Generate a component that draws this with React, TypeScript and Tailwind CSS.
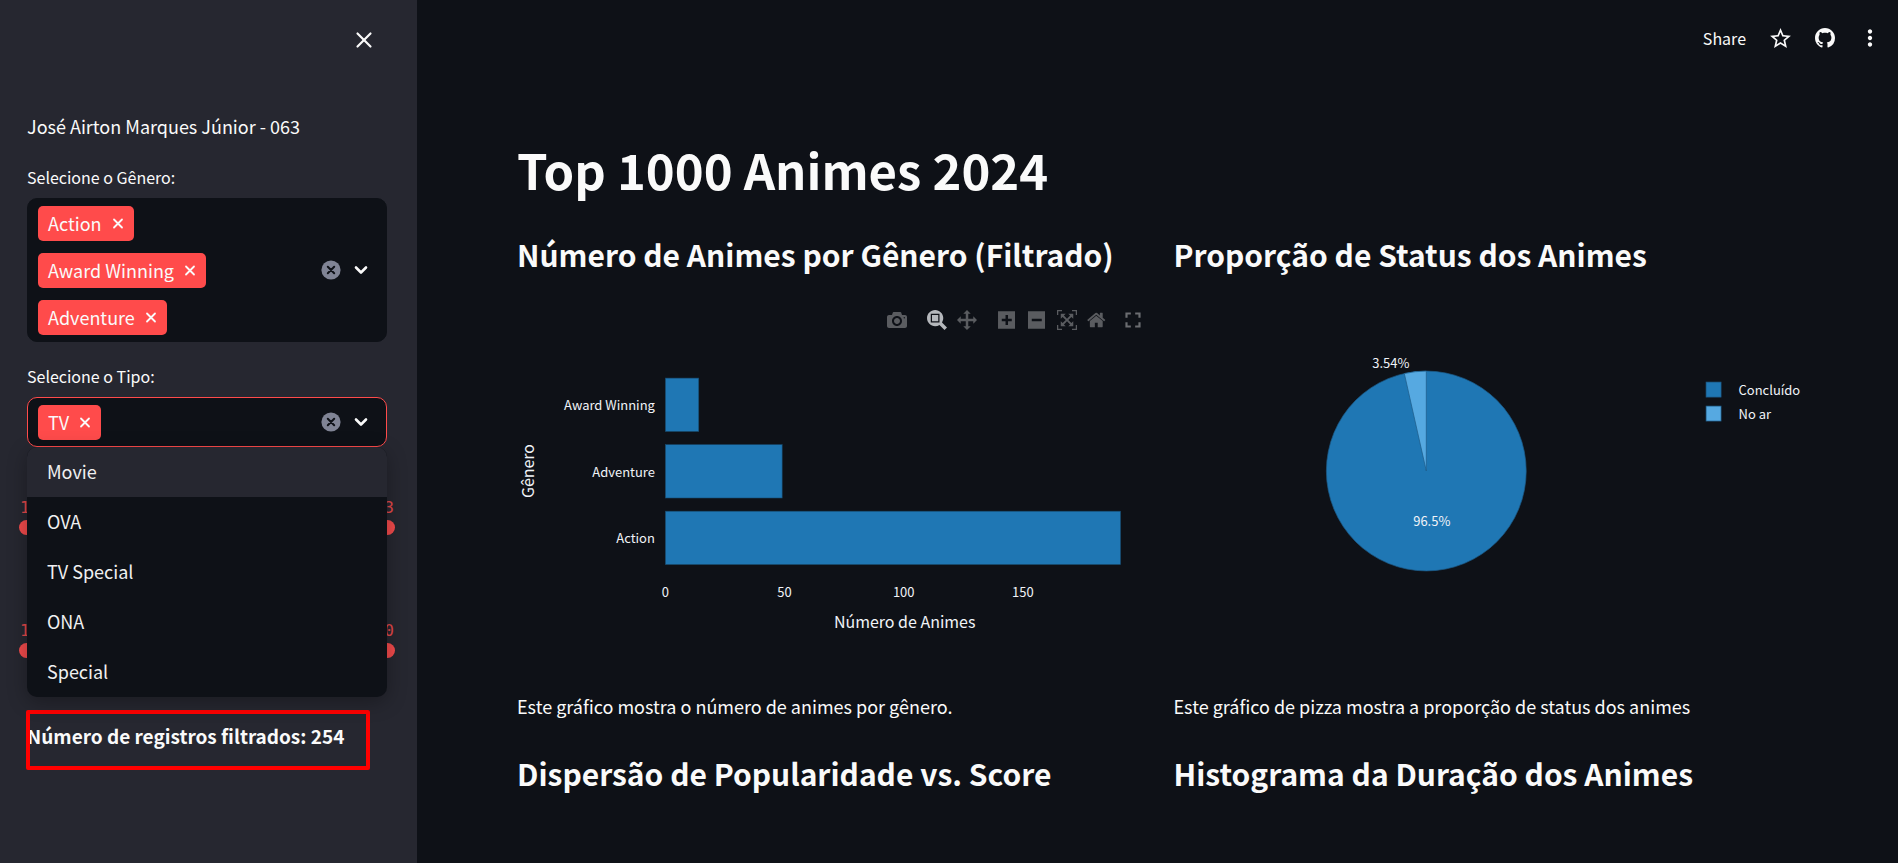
import { useState, type ReactNode } from "react";
import { X } from "lucide-react";
import { MdFullscreen, MdMoreVert, MdStarOutline } from "react-icons/md";

const CHART_TEXT = "fill-[#f0f3f8] text-[13px]";
const AXIS_TITLE = "fill-[#f0f3f8] text-[16px]";

const plotIcons = {
  camera:
    "m500 450c-83 0-150-67-150-150 0-83 67-150 150-150 83 0 150 67 150 150 0 83-67 150-150 150z m400 150h-120c-16 0-34 13-39 29l-31 93c-6 15-23 28-40 28h-340c-16 0-34-13-39-28l-31-94c-6-15-23-28-40-28h-120c-55 0-100-45-100-100v-450c0-55 45-100 100-100h800c55 0 100 45 100 100v450c0 55-45 100-100 100z m-400-550c-138 0-250 112-250 250 0 138 112 250 250 250 138 0 250-112 250-250 0-138-112-250-250-250z m365 380c-19 0-35 16-35 35 0 19 16 35 35 35 19 0 35-16 35-35 0-19-16-35-35-35z",
  zoom: "m1000-25l-250 251c40 63 63 138 63 218 0 224-182 406-407 406-224 0-406-182-406-406s183-406 407-406c80 0 155 22 218 62l250-250 125 125z m-812 250l0 438 437 0 0-438-437 0z m62 375l313 0 0-312-313 0 0 312z",
  pan: "m1000 350l-187 188 0-125-250 0 0 250 125 0-188 187-187-187 125 0 0-250-250 0 0 125-188-188 186-187 0 125 252 0 0-250-125 0 187-188 188 188-125 0 0 250 250 0 0-126 187 188z",
  plus: "m1 787l0-875 875 0 0 875-875 0z m687-500l-187 0 0-187-125 0 0 187-188 0 0 125 188 0 0 187 125 0 0-187 187 0 0-125z",
  minus: "m0 788l0-876 875 0 0 876-875 0z m688-500l-500 0 0 125 500 0 0-125z",
  autoscale:
    "m250 850l-187 0-63 0 0-62 0-188 63 0 0 188 187 0 0 62z m688 0l-188 0 0-62 188 0 0-188 62 0 0 188 0 62-62 0z m-875-938l0 188-63 0 0-188 0-62 63 0 187 0 0 62-187 0z m875 188l0-188-188 0 0-62 188 0 62 0 0 62 0 188-62 0z m-125 188l-1 0-93-94-156 156 156 156 92-93 2 0 0 250-250 0 0-2 93-92-156-156-156 156 94 92 0 2-250 0 0-250 0 0 93 93 157-156-157-156-93 94 0 0 0-250 250 0 0 0-94 93 156 157 156-157-93-93 0 0 250 0 0 250z",
  home: "m786 296v-267q0-15-11-26t-25-10h-214v214h-143v-214h-214q-15 0-25 10t-11 26v267q0 1 0 2t0 2l321 264 321-264q1-1 1-4z m124 39l-34-41q-5-5-12-6h-2q-7 0-12 3l-386 322-386-322q-7-4-13-4-7 2-12 7l-35 41q-4 5-3 13t6 12l401 334q18 15 42 15t43-15l136-114v109q0 8 5 13t13 5h107q8 0 13-5t5-13v-227l122-102q5-5 6-12t-4-13z",
};

function PlotButton({ icon, label, width = 1000, active = false }: { icon: keyof typeof plotIcons; label: string; width?: number; active?: boolean }) {
  return (
    <button type="button" aria-label={label} className={`flex size-[30px] items-center justify-center ${active ? "text-[#b5b8bc]" : "text-[#5a5c60]"}`}>
      <svg viewBox={`0 0 ${width} 1000`} className="h-5" fill="currentColor" aria-hidden="true">
        <path transform="matrix(1 0 0 -1 0 850)" d={plotIcons[icon]} />
      </svg>
    </button>
  );
}

function Tag({ children }: { children: string }) {
  return (
    <span className="flex h-[35px] items-center gap-[9px] rounded-[5px] bg-[#ff4b4b] pr-[9px] pb-px pl-[10px] text-[18px] leading-[30px]">
      {children}
      <button type="button" aria-label={`Remover ${children}`} className="flex size-[14px] items-center justify-center">
        <svg viewBox="0 0 14 14" className="size-[14px]" fill="none" stroke="currentColor" strokeWidth="1.8" strokeLinecap="round" aria-hidden="true">
          <path d="M3 3.5l8 8M11 3.5l-8 8" />
        </svg>
      </button>
    </span>
  );
}

function MultiSelect({ id, label, tags, focused = false, tall = false, children }: { id: string; label: string; tags: string[]; focused?: boolean; tall?: boolean; children?: ReactNode }) {
  return (
    <div>
      <label htmlFor={id} className="mb-[9px] block text-[16px] leading-6">
        {label}
      </label>
      <div className="relative">
        <div className={`flex items-center rounded-[10px] border bg-[#0e1117] pl-[10px] ${focused ? "border-[#ff4b4b]" : "border-[#0e1117]"} ${tall ? "min-h-36" : "min-h-[50px]"}`}>
          <div className={`flex min-w-0 flex-1 gap-3 ${tall ? "flex-col items-start" : "items-center"}`}>
            {tags.map((tag) => (
              <Tag key={tag}>{tag}</Tag>
            ))}
          </div>
          <input id={id} role="combobox" aria-expanded={focused} aria-controls={`${id}-options`} className="w-3 bg-transparent outline-none" />
          <button type="button" aria-label="Limpar" className="mr-3 shrink-0">
            <svg viewBox="0 0 20 20" className="size-5" aria-hidden="true">
              <circle cx="10" cy="10" r="9.6" fill="#808495" />
              <path d="M6.8 6.8l6.4 6.4M13.2 6.8l-6.4 6.4" stroke="#0e1117" strokeWidth="2" strokeLinecap="round" />
            </svg>
          </button>
          <button type="button" aria-label="Abrir" className="mr-[17px] shrink-0">
            <svg viewBox="0 0 16 16" className="size-4" fill="none" stroke="currentColor" strokeWidth="2.6" strokeLinecap="round" strokeLinejoin="round" aria-hidden="true">
              <path d="M3 5.5l5 5 5-5" />
            </svg>
          </button>
        </div>
        {children}
      </div>
    </div>
  );
}

const THUMB =
  "pointer-events-none col-start-1 row-start-1 h-[15px] w-full appearance-none bg-transparent [&::-webkit-slider-thumb]:pointer-events-auto [&::-webkit-slider-thumb]:size-[15px] [&::-webkit-slider-thumb]:appearance-none [&::-webkit-slider-thumb]:rounded-full [&::-webkit-slider-thumb]:bg-[#f04a4b]";

function RangeSlider({ label, low, high }: { label: string; low: string; high: string }) {
  const [range, setRange] = useState([0, 100]);
  return (
    <div className="-mx-2">
      <div className="mb-[2px] flex justify-between px-px font-['DejaVu_Sans_Mono',monospace] text-[16px] leading-5 text-[#e2484a]">
        <span>{low}</span>
        <span>{high}</span>
      </div>
      <div className="grid">
        <input type="range" aria-label={`${label} mínimo`} value={range[0]} onChange={(e) => setRange([+e.target.value, range[1]])} className={THUMB} />
        <input type="range" aria-label={`${label} máximo`} value={range[1]} onChange={(e) => setRange([range[0], +e.target.value])} className={THUMB} />
      </div>
    </div>
  );
}

const genres = [
  { name: "Award Winning", count: 14 },
  { name: "Adventure", count: 49 },
  { name: "Action", count: 191 },
];

function BarChart() {
  const left = 148.5;
  const unit = 2.385;
  return (
    <svg viewBox="0 0 625 335" className="h-[335px] w-full overflow-visible" role="img" aria-label="Número de Animes por Gênero">
      {genres.map((g, i) => (
        <g key={g.name}>
          <rect x={left} y={43 + i * 66.6} width={g.count * unit} height={53.4} fill="#1f77b4" stroke="#184a6c" strokeWidth="0.6" />
          <text x={138} y={75 + i * 66.5} textAnchor="end" className={CHART_TEXT}>
            {g.name}
          </text>
        </g>
      ))}
      {[0, 50, 100, 150].map((t) => (
        <text key={t} x={left + t * unit} y={262} textAnchor="middle" className={CHART_TEXT}>
          {t}
        </text>
      ))}
      <text x={388} y={293} textAnchor="middle" className={AXIS_TITLE}>
        Número de Animes
      </text>
      <text transform="translate(17 136) rotate(-90)" textAnchor="middle" className={AXIS_TITLE}>
        Gênero
      </text>
    </svg>
  );
}

function PieChart() {
  return (
    <svg viewBox="0 0 625 365" className="h-[365px] w-full overflow-visible" role="img" aria-label="Proporção de Status dos Animes">
      <g stroke="#1d5a86" strokeWidth="0.7">
        <circle cx="252.5" cy="166" r="100" fill="#1f77b4" />
        <path d="M252.5 166V66a100 100 0 0 0-22 2.45z" fill="#56a9e1" />
        <rect x="532.5" y="77" width="15" height="15" fill="#1f77b4" />
        <rect x="532.5" y="101" width="15" height="15" fill="#56a9e1" />
      </g>
      <text x="217" y="63" textAnchor="middle" className={CHART_TEXT}>
        3.54%
      </text>
      <text x="258" y="221" textAnchor="middle" className={CHART_TEXT}>
        96.5%
      </text>
      <text x="565" y="90" className={CHART_TEXT}>
        Concluído
      </text>
      <text x="565" y="114" className={CHART_TEXT}>
        No ar
      </text>
    </svg>
  );
}

const H3 = "text-[30px] leading-[42px] font-semibold whitespace-nowrap";

export default function App() {
  return (
    <div className="flex min-h-screen bg-[#0e1117] font-['Noto_Sans_CJK_SC',sans-serif] text-[18px] text-[#fafafa]">
      <aside className="w-[417px] shrink-0 bg-[#262730] pr-[30px] pl-[27px]">
        <div className="flex h-[111px] justify-end pt-[27px] pr-[10px]">
          <button type="button" aria-label="Fechar" className="size-[26px]">
            <X className="size-[26px]" strokeWidth={2} />
          </button>
        </div>
        <p className="mb-6 leading-[30px]">José Airton Marques Júnior - 063</p>
        <MultiSelect id="genero" label="Selecione o Gênero:" tags={["Action", "Award Winning", "Adventure"]} tall />
        <div className="h-[22px]" />
        <MultiSelect id="tipo" label="Selecione o Tipo:" tags={["TV"]} focused>
          <ul id="tipo-options" role="listbox" className="absolute inset-x-0 top-full z-10 overflow-hidden rounded-[10px] bg-[#0e1117] text-[#f0f0f1] shadow-[0_5px_20px_rgba(0,0,0,0.3)]">
            {["Movie", "OVA", "TV Special", "ONA", "Special"].map((option, i) => (
              <li key={option} role="option" aria-selected={i === 0} className={`flex h-[50px] items-center px-5 pb-[2px] leading-[30px] ${i === 0 ? "bg-[#262730]" : ""}`}>
                {option}
              </li>
            ))}
          </ul>
        </MultiSelect>
        <div className="flex flex-col gap-[86px] pt-[51px]">
          <RangeSlider label="Primeiro intervalo" low="1" high="3" />
          <RangeSlider label="Segundo intervalo" low="1" high="0" />
        </div>
        <p className="relative mt-[62px] text-[19px] leading-[32px] font-semibold whitespace-nowrap">
          Número de registros filtrados: 254
          <span className="absolute -top-[10px] -left-px h-[60px] w-[344px] rounded-xs border-4 border-[#ff0000]" />
        </p>
      </aside>

      <main className="min-w-0 flex-1">
        <header className="flex h-[76px] items-center justify-end pr-[15px] text-[16px]">
          <button type="button" className="mr-[22px] leading-6">
            Share
          </button>
          <button type="button" aria-label="Favoritar" className="mr-[22px]">
            <MdStarOutline className="size-[25px]" />
          </button>
          <a href="#github" aria-label="GitHub" className="mr-[22px]">
            <svg viewBox="0 0 16 16" className="size-5" fill="currentColor" aria-hidden="true">
              <path d="M8 0C3.58 0 0 3.58 0 8c0 3.54 2.29 6.53 5.47 7.59.4.07.55-.17.55-.38 0-.19-.01-.82-.01-1.49-2.01.37-2.53-.49-2.69-.94-.09-.23-.48-.94-.82-1.13-.28-.15-.68-.52-.01-.53.63-.01 1.08.58 1.23.82.72 1.21 1.87.87 2.33.66.07-.52.28-.87.51-1.07-1.78-.2-3.64-.89-3.64-3.95 0-.87.31-1.59.82-2.15-.08-.2-.36-1.02.08-2.12 0 0 .67-.21 2.2.82.64-.18 1.32-.27 2-.27s1.36.09 2 .27c1.53-1.04 2.2-.82 2.2-.82.44 1.1.16 1.92.08 2.12.51.56.82 1.27.82 2.15 0 3.07-1.87 3.75-3.65 3.95.29.25.54.73.54 1.48 0 1.07-.01 1.93-.01 2.2 0 .21.15.46.55.38A8.01 8.01 0 0 0 16 8c0-4.42-3.58-8-8-8z" />
            </svg>
          </a>
          <button type="button" aria-label="Menu">
            <MdMoreVert className="size-[26px]" />
          </button>
        </header>

        <div className="px-[100px] pt-[60px]">
          <h1 className="text-[49px] leading-[66px] font-bold">Top 1000 Animes 2024</h1>

          <div className="mt-[31px] grid grid-cols-2 gap-x-8">
            <section>
              <h3 className={H3}>Número de Animes por Gênero (Filtrado)</h3>
              <div className="-mr-1 mt-[30px] flex h-[30px] items-center justify-end">
                <PlotButton icon="camera" label="Baixar imagem" />
                <span className="w-[10px]" />
                <PlotButton icon="zoom" label="Zoom" active />
                <PlotButton icon="pan" label="Mover" />
                <span className="w-[10px]" />
                <PlotButton icon="plus" label="Aproximar" width={875} />
                <PlotButton icon="minus" label="Afastar" width={875} />
                <PlotButton icon="autoscale" label="Ajustar" />
                <PlotButton icon="home" label="Reiniciar eixos" width={928} />
                <button type="button" aria-label="Tela cheia" className="ml-2 text-[#6b6d71]">
                  <MdFullscreen className="size-[26px]" />
                </button>
              </div>
              <BarChart />
              <p className="mt-5 leading-8">Este gráfico mostra o número de animes por gênero.</p>
            </section>
            <section>
              <h3 className={H3}>Proporção de Status dos Animes</h3>
              <div className="mt-[30px]">
                <PieChart />
              </div>
              <p className="mt-5 leading-8">Este gráfico de pizza mostra a proporção de status dos animes</p>
            </section>
            <h3 className={`${H3} mt-[30px]`}>Dispersão de Popularidade vs. Score</h3>
            <h3 className={`${H3} mt-[30px]`}>Histograma da Duração dos Animes</h3>
          </div>
        </div>
      </main>
    </div>
  );
}
